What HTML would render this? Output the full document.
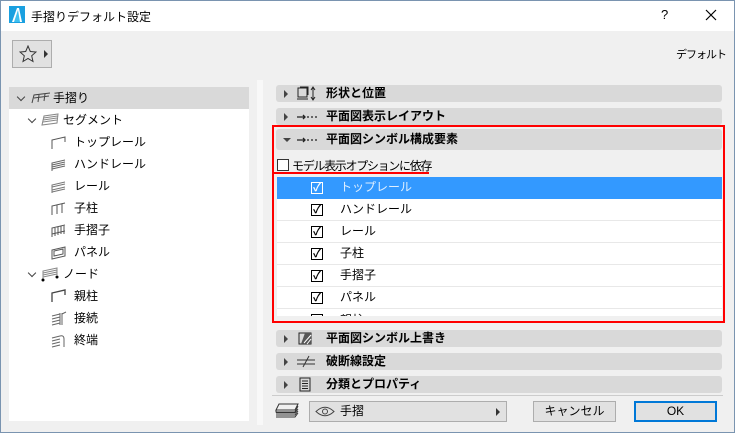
<!DOCTYPE html><html><head><meta charset="utf-8"><style>
*{box-sizing:border-box;margin:0;padding:0}
body{width:735px;height:433px;overflow:hidden;background:#f0f0f0;font-family:"Liberation Sans","Noto Sans CJK JP",sans-serif;font-size:12px;color:#000;position:relative;white-space:nowrap}
.a{position:absolute}
.frame{left:0;top:0;width:735px;height:433px;border:1px solid #7a94b0;pointer-events:none}
.hdr{position:absolute;left:276px;width:446px;height:17px;background:#d9d9d9;border-radius:3px;font-weight:bold;font-size:12px;line-height:17px}
.hdr .tri{position:absolute;left:8px;top:5px;width:0;height:0;border-top:4px solid transparent;border-bottom:4px solid transparent;border-left:4px solid #444}
.hdr .t{position:absolute;left:50px}
.hdr svg{position:absolute;left:20px;top:1px}
.row{position:absolute;left:277px;width:445px;height:22px;border-bottom:1px solid #e8e8e8;background:#fff;line-height:21px}
.row .cb{position:absolute;left:34px;top:5px;width:12px;height:12px;border:1px solid #000;background:#fff;font-size:11px;line-height:10px;text-align:center;font-weight:bold}
.row .t{position:absolute;left:63px}
.tree{position:absolute;font-size:12px;line-height:22px}
.ti{position:absolute}
.btn{position:absolute;height:21px;background:#e1e1e1;border:1px solid #adadad;text-align:center;line-height:19px}
.chev{position:absolute;width:6px;height:6px;border-right:1.5px solid #444;border-bottom:1.5px solid #444;transform:rotate(45deg)}
</style></head><body>
<div class="a" style="left:0;top:0;width:735px;height:31px;background:#fff"></div>
<svg class="a" style="left:9px;top:6px" width="16" height="17"><rect width="16" height="17" fill="#1aa0e0"/><path d="M3 16 L8 2 L10 2 L13 16Z" fill="#fff"/><path d="M5 16 L9 4 L11 16Z" fill="#40c0f0"/></svg>
<div class="a" style="left:31px;top:8px;font-size:12px">手摺りデフォルト設定</div>
<div class="a" style="left:661px;top:7px;font-size:13px">?</div>
<svg class="a" style="left:705px;top:9px" width="12" height="12"><path d="M1 1L11 11M11 1L1 11" stroke="#000" stroke-width="1.2"/></svg>
<div class="a" style="left:12px;top:40px;width:40px;height:28px;background:#e1e1e1;border:1px solid #adadad"></div>
<svg class="a" style="left:19px;top:45px" width="18" height="18"><path d="M9 1L11.3 6.5L17 7L12.7 10.8L14 16.5L9 13.5L4 16.5L5.3 10.8L1 7L6.7 6.5Z" fill="none" stroke="#333" stroke-width="1"/></svg>
<div class="a" style="left:44px;top:50px;border-top:4px solid transparent;border-bottom:4px solid transparent;border-left:4px solid #333"></div>
<div class="a" style="right:9px;top:46px;font-size:11px;letter-spacing:-1px">デフォルト</div>
<div class="a" style="left:9px;top:87px;width:240px;height:334px;background:#fff"></div>
<div class="a" style="left:9px;top:87px;width:240px;height:22px;background:#d9d9d9"></div>
<div class="a" style="left:257px;top:80px;width:6px;height:345px;background:#f8f8f8"></div>

<div class="chev" style="left:18px;top:94px"></div>
<svg class="ti" style="left:31px;top:92px" width="20" height="12"><path d="M1 11L3 3L19 1M3 6L18 4M8 3L7 10M14 2L13 9" fill="none" stroke="#444" stroke-width="1"/></svg>
<div class="tree" style="left:53px;top:87px">手摺り</div>
<div class="chev" style="left:29px;top:116px"></div>
<svg class="ti" style="left:41px;top:113px" width="18" height="13"><path d="M1 12L3 3L17 1L16 10Z M2.5 5L16.5 3M2 7L16 5M2 9L16 7" fill="none" stroke="#888" stroke-width="1"/></svg>
<div class="tree" style="left:63px;top:109px">セグメント</div>

<svg class="ti" style="left:51px;top:136px" width="16" height="14"><path d="M1 13L1 4L14 1L14 6" fill="none" stroke="#555"/></svg><div class="tree" style="left:74px;top:131px">トップレール</div>
<svg class="ti" style="left:51px;top:158px" width="16" height="14"><path d="M1 13L1 5L14 2M1 7L14 4M1 9L14 6M1 11L14 8" fill="none" stroke="#666"/></svg><div class="tree" style="left:74px;top:153px">ハンドレール</div>
<svg class="ti" style="left:51px;top:180px" width="16" height="14"><path d="M1 13L1 5L14 2M1 7L14 4M1 10L14 7M1 12L14 9" fill="none" stroke="#777"/></svg><div class="tree" style="left:74px;top:175px">レール</div>
<svg class="ti" style="left:51px;top:202px" width="16" height="14"><path d="M1 13L1 4L14 1M6 12L6 3M11 11L11 2" fill="none" stroke="#555"/></svg><div class="tree" style="left:74px;top:197px">子柱</div>
<svg class="ti" style="left:51px;top:224px" width="16" height="14"><path d="M1 13L1 4L14 1M1 10L14 7M4 12L4 4M7 11L7 3M10 10L10 2M13 10L13 2" fill="none" stroke="#555"/></svg><div class="tree" style="left:74px;top:219px">手摺子</div>
<svg class="ti" style="left:51px;top:246px" width="16" height="14"><path d="M1 13L1 4L14 1L14 10Z M3 10L3 5L12 3L12 8Z" fill="none" stroke="#555"/></svg><div class="tree" style="left:74px;top:241px">パネル</div>
<div class="chev" style="left:29px;top:270px"></div>
<svg class="ti" style="left:40px;top:266px" width="20" height="16"><path d="M3 14L3 5L17 2L17 9M3 7L17 4M3 9L17 6M3 11L17 8" fill="none" stroke="#888"/><circle cx="3" cy="14" r="1.5"/><circle cx="17" cy="11" r="1.5"/></svg>
<div class="tree" style="left:63px;top:263px">ノード</div>
<svg class="ti" style="left:51px;top:289px" width="16" height="14"><path d="M1 13L1 4L14 1L14 6" fill="none" stroke="#444" stroke-width="1.3"/></svg><div class="tree" style="left:74px;top:285px">親柱</div>
<svg class="ti" style="left:51px;top:311px" width="16" height="15"><path d="M1 5L9 3M1 8L9 6M1 11L9 9M1 14L9 12M9 2L9 14M11 2L11 14M11 3L15 1" fill="none" stroke="#666"/></svg><div class="tree" style="left:74px;top:307px">接続</div>
<svg class="ti" style="left:51px;top:333px" width="16" height="15"><path d="M1 5L9 3M1 8L9 6M1 11L9 9M1 14L9 12M9 3Q13 2 13 6L13 14" fill="none" stroke="#666"/></svg><div class="tree" style="left:74px;top:329px">終端</div>

<div class="hdr" style="top:85px"><span class="tri"></span><svg width="22" height="15"><rect x="2" y="2" width="9" height="9" fill="none" stroke="#222"/><path d="M4 1H12V9M1 13H12M17 2V13M15 4L17 1L19 4M15 11L17 14L19 11" fill="none" stroke="#222"/></svg><span class="t">形状と位置</span></div>
<div class="hdr" style="top:108px"><span class="tri"></span><svg width="22" height="15"><path d="M1 8H9M7 6L9 8L7 10M11 8H13M15 8H17M19 8H21" fill="none" stroke="#222" stroke-width="1.3"/></svg><span class="t">平面図表示レイアウト</span></div>
<div class="hdr" style="top:129px;height:21px;line-height:21px"><span class="tri" style="left:7px;top:9px;border-left:4px solid transparent;border-right:4px solid transparent;border-top:4px solid #444;border-bottom:0"></span><svg width="22" height="15" style="top:3px"><path d="M1 8H9M7 6L9 8L7 10M11 8H13M15 8H17M19 8H21" fill="none" stroke="#222" stroke-width="1.3"/></svg><span class="t">平面図シンボル構成要素</span></div>
<div class="a" style="left:277px;top:159px;width:12px;height:12px;border:1px solid #333;background:#fff"></div>
<div class="a" style="left:292px;top:157px;letter-spacing:-1.3px">モデル表示オプションに依存</div>
<div class="a" style="left:272px;top:172px;width:157px;height:2px;background:#f00"></div>
<div class="a" style="left:277px;top:177px;width:445px;height:139px;background:#fff"></div>
<div class="row" style="top:177px;background:#3399ff;color:#dfefff;border:none"><span class="cb" style="background:#3399ff;border-color:#fff;color:#fff">✓</span><span class="t">トップレール</span></div>
<div class="row" style="top:199px"><span class="cb">✓</span><span class="t">ハンドレール</span></div>
<div class="row" style="top:221px"><span class="cb">✓</span><span class="t">レール</span></div>
<div class="row" style="top:243px"><span class="cb">✓</span><span class="t">子柱</span></div>
<div class="row" style="top:265px"><span class="cb">✓</span><span class="t">手摺子</span></div>
<div class="row" style="top:287px"><span class="cb">✓</span><span class="t">パネル</span></div>
<div class="a" style="left:277px;top:309px;width:445px;height:7px;overflow:hidden;background:#fff"><div class="a" style="left:34px;top:5px;width:12px;height:12px;border:1px solid #000"></div><div class="a" style="left:63px;top:2px">親柱</div></div>
<div class="a" style="left:272px;top:125px;width:453px;height:198px;border:2px solid #f00"></div>

<div class="hdr" style="top:330px"><span class="tri"></span><svg width="22" height="15"><rect x="3" y="2" width="12" height="11" fill="none" stroke="#222"/><path d="M9 2H15V13H5Z" fill="#555"/><path d="M8 12L15 4M11 13L15 8" stroke="#fff"/></svg><span class="t">平面図シンボル上書き</span></div>
<div class="hdr" style="top:353px"><span class="tri"></span><svg width="22" height="15"><path d="M1 6H19M1 10H19M7 13L13 2" fill="none" stroke="#333"/></svg><span class="t">破断線設定</span></div>
<div class="hdr" style="top:376px"><span class="tri"></span><svg width="22" height="15"><rect x="4" y="1" width="10" height="13" fill="none" stroke="#222"/><path d="M6 4H12M6 6.5H12M6 9H12M6 11.5H12" stroke="#222"/></svg><span class="t">分類とプロパティ</span></div>
<div class="a" style="left:272px;top:395px;width:451px;height:1px;background:#ccc"></div>
<svg class="a" style="left:274px;top:402px" width="26" height="18"><g fill="none" stroke="#333"><path d="M5 2H24L21 8H2Z"/><path d="M2 8V10H21L24 4"/><path d="M2 11H21L24 7"/><path d="M2 13H21L24 9"/><path d="M2 15H21L24 11"/></g></svg>
<div class="btn" style="left:309px;top:401px;width:198px;text-align:left;padding-left:30px">手摺<svg style="position:absolute;left:5px;top:4px" width="20" height="11"><path d="M1 5.5Q10 -3 19 5.5Q10 14 1 5.5Z" fill="none" stroke="#444"/><circle cx="10" cy="5.5" r="2.5" fill="none" stroke="#444"/></svg><span style="position:absolute;right:6px;top:6px;border-top:4px solid transparent;border-bottom:4px solid transparent;border-left:4px solid #333"></span></div>
<div class="btn" style="left:533px;top:401px;width:83px">キャンセル</div>
<div class="btn" style="left:634px;top:401px;width:83px;border:2px solid #0078d7;line-height:17px">OK</div>
<div class="a frame"></div>
</body></html>
